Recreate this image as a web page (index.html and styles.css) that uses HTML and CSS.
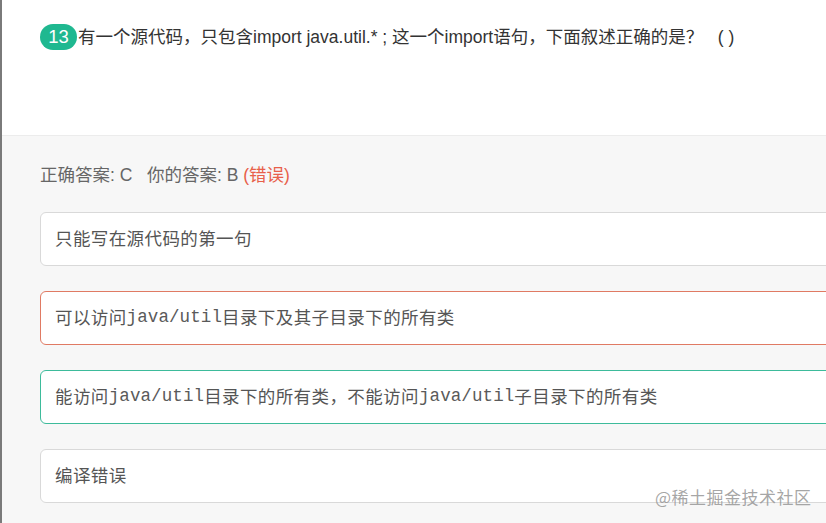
FILE: index.html
```html
<!DOCTYPE html>
<html lang="zh">
<head>
<meta charset="utf-8">
<title>题目 13</title>
<link rel="stylesheet" href="styles.css">
</head>
<body>
<div class="page">
  <section class="question">
    <span class="badge">13</span>
    <span class="q-text">有一个源代码，只包含import java.util.* ; 这一个import语句，下面叙述正确的是？&nbsp;&nbsp;&nbsp;( )</span>
  </section>
  <section class="answers">
    <div class="result">正确答案: C&nbsp;&nbsp;&nbsp;你的答案: B <span class="wrong">(错误)</span></div>
    <div class="option">只能写在源代码的第一句</div>
    <div class="option option-wrong">可以访问<span class="code">java/util</span>目录下及其子目录下的所有类</div>
    <div class="option option-right">能访问<span class="code">java/util</span>目录下的所有类，不能访问<span class="code">java/util</span>子目录下的所有类</div>
    <div class="option">编译错误</div>
  </section>
  <div class="watermark">@稀土掘金技术社区</div>
</div>
</body>
</html>
```

FILE: styles.css
```css
html, body {
  margin: 0;
  padding: 0;
  height: 100%;
  overflow: hidden;
}

body {
  background: #f7f7f7;
  font-family: "Liberation Sans", "Noto Sans CJK SC", sans-serif;
}

.page {
  position: relative;
  height: 523px;
  border-left: 2px solid #7a7a7a;
  box-sizing: border-box;
  background: #f7f7f7;
}

.question {
  height: 136px;
  background: #fff;
  border-bottom: 1px solid #ececec;
  padding: 24px 0 0 38px;
  box-sizing: border-box;
  display: flex;
  align-items: flex-start;
}

.badge {
  display: inline-flex;
  align-items: center;
  justify-content: center;
  width: 37px;
  height: 26px;
  border-radius: 13px;
  background: #1fb890;
  color: #fff;
  font-size: 18.5px;
  flex-shrink: 0;
}

.q-text {
  margin-left: 1px;
  font-size: 17.5px;
  line-height: 26px;
  color: #333;
  white-space: nowrap;
}

.answers {
  padding: 27px 0 0 38px;
  width: 900px;
  display: flex;
  flex-direction: column;
  gap: 25px;
}

.result {
  font-size: 17.5px;
  line-height: 24px;
  color: #666;
}

.wrong {
  color: #e8604a;
}

.option {
  height: 54px;
  box-sizing: border-box;
  background: #fff;
  border: 1px solid #d9d9d9;
  border-radius: 6px;
  padding: 0 0 3px 14px;
  display: flex;
  align-items: center;
  font-family: "Liberation Mono", "Noto Sans CJK SC", monospace;
  font-size: 17.5px;
  letter-spacing: 0.4px;
  color: #555;
  white-space: nowrap;
}

.code {
  letter-spacing: 0.1px;
  color: #5a5a5a;
}

.option-wrong {
  border-color: #e07a63;
}

.option-right {
  border-color: #3dbb9b;
}

.watermark {
  position: absolute;
  left: 653px;
  top: 485px;
  font-family: "Noto Sans CJK SC", sans-serif;
  font-size: 17px;
  line-height: 24px;
  color: rgba(150, 150, 150, 0.85);
  letter-spacing: 0.5px;
  white-space: nowrap;
}
```
